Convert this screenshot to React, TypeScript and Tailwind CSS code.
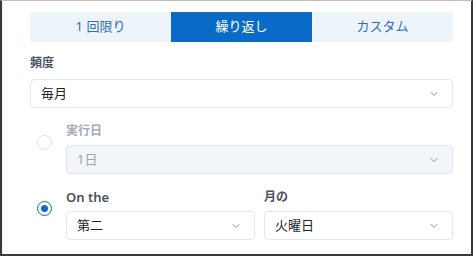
import { ChevronDown } from "lucide-react";

const FONT = {
	fontFamily: '"Noto Sans", "Noto Sans CJK JP", sans-serif',
};

function Select({
	value,
	disabled,
	className,
}: {
	value: string;
	disabled?: boolean;
	className?: string;
}) {
	return (
		<div
			className={`flex h-[29px] items-center justify-between rounded-[4px] border border-[#e3e8ef] pr-[12px] pl-[10px] text-[13px] ${
				disabled ? "bg-[#f2f5f9] text-[#9aa3ae]" : "bg-white text-[#1f2328]"
			} ${className ?? ""}`}
		>
			<span>{value}</span>
			<ChevronDown className="h-[12px] w-[12px] text-[#8a94a3]" strokeWidth={2} />
		</div>
	);
}

function Radio({ checked }: { checked?: boolean }) {
	return (
		<div
			className={`flex h-[15px] w-[15px] items-center justify-center rounded-full border-[1.5px] ${
				checked ? "border-[#0a6ac8]" : "border-[#dde2e8]"
			}`}
		>
			{checked && <div className="h-[7px] w-[7px] rounded-full bg-[#0a6ac8]" />}
		</div>
	);
}

export default function App() {
	const tabs = ["1 回限り", "繰り返し", "カスタム"];
	return (
		<div
			style={FONT}
			className="h-[256px] w-[473px] border-t border-r-2 border-b-2 border-l-2 border-t-[#bdbdbd] border-r-[#3a3a3a] border-b-[#3a3a3a] border-l-[#3a3a3a] bg-white"
		>
			<div className="h-full border-l border-[#eef0f3] pt-[11px] pr-[18px] pl-[27px]">
				<div className="flex h-[30px] rounded-[3px] bg-[#eef4fb] text-[13px]">
					{tabs.map((t, i) => (
						<div
							key={t}
							className={`flex flex-1 items-center justify-center ${
								i === 1 ? "bg-[#0a6ac8] text-white" : "text-[#2f6db5]"
							}`}
						>
							{t}
						</div>
					))}
				</div>

				<div className="mt-[13px] text-[12px] font-bold leading-[16px] text-[#4a5260]">頻度</div>
				<Select value="毎月" className="mt-[8px]" />

				<div className="mt-[15px] flex gap-[14px] pl-[7px]">
					<div className="pt-[12px]">
						<Radio />
					</div>
					<div className="flex-1">
						<div className="text-[12px] font-bold leading-[16px] text-[#a3abb6]">実行日</div>
						<Select value="1日" disabled className="mt-[6px]" />
					</div>
				</div>

				<div className="mt-[15px] flex gap-[14px] pl-[7px]">
					<div className="pt-[12px]">
						<Radio checked />
					</div>
					<div className="flex flex-1 gap-[9px]">
						<div className="flex-1">
							<div className="text-[13px] font-semibold leading-[16px] text-[#4a5260]">On the</div>
							<Select value="第二" className="mt-[6px]" />
						</div>
						<div className="flex-1">
							<div className="text-[12px] font-bold leading-[16px] text-[#4a5260]">月の</div>
							<Select value="火曜日" className="mt-[6px]" />
						</div>
					</div>
				</div>
			</div>
		</div>
	);
}
